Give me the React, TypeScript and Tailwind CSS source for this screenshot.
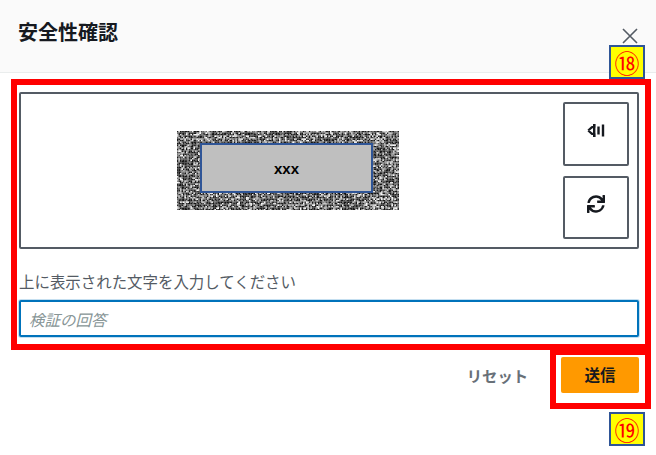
import { FaSync } from 'react-icons/fa'

const CJK = 'font-["Noto_Sans_CJK_JP","Noto_Sans",sans-serif]'

// seeded so the captcha noise is the same on every load
function makeNoise(cols: number, rows: number) {
    let seed = 18
    const cells: { x: number; y: number; c: string }[] = []
    for (let y = 0; y < rows; y++) {
        for (let x = 0; x < cols; x++) {
            seed = (seed * 1664525 + 1013904223) % 4294967296
            const v = (seed >>> 8) / 16777216
            const shade = Math.round(20 + v * v * 235)
            cells.push({ x, y, c: `rgb(${shade},${shade},${shade})` })
        }
    }
    return cells
}

const NOISE = makeNoise(148, 53)

function Noise() {
    return (
        <svg width="222" height="79" viewBox="0 0 148 52.67" className="block">
            {NOISE.map(n => (
                <rect key={`${n.x}-${n.y}`} x={n.x} y={n.y} width="1.05" height="1.05" fill={n.c} />
            ))}
        </svg>
    )
}

function SpeakerIcon() {
    return (
        <svg width="18" height="15" viewBox="0 0 18 15" fill="none" stroke="#16191f">
            <path d="M1.2 7.5 L5 4.2 H7.2 V1 M7.2 14 V10.8 H5 L1.2 7.5" strokeWidth="2.2" strokeLinejoin="round" />
            <path d="M7.2 1 V14" strokeWidth="2.4" />
            <path d="M11.5 3.5 V11.5" strokeWidth="2.4" />
            <path d="M16 1.5 V13.5" strokeWidth="2.4" />
        </svg>
    )
}

function Badge({ label, className }: { label: string; className: string }) {
    return (
        <div className={`absolute flex h-[34px] w-[36px] items-center justify-center border-2 border-[#2f5597] bg-[#ffff00] text-[25px] leading-none text-[#ff0000] ${className}`}>
            {label}
        </div>
    )
}

export default function App() {
    return (
        <div className={`relative h-[455px] w-[656px] overflow-hidden bg-white ${CJK}`}>
            {/* Header */}
            <div className="flex h-[73px] items-start justify-between border-b border-[#eaeded] bg-[#fafafa] pl-[18px] pr-[18px]">
                <h2 className="mt-[18px] text-[20px] font-bold leading-[28px] text-[#16191f]">安全性確認</h2>
                <button className="mt-[28px] text-[#545b64]">
                    <svg width="16" height="16" viewBox="0 0 16 16" stroke="currentColor" strokeWidth="1.6" fill="none">
                        <path d="M1 1 L15 15 M15 1 L1 15" />
                    </svg>
                </button>
            </div>

            <div className="pl-[19px] pr-[17px] pt-[19px]">
                {/* Captcha */}
                <div className="flex h-[157px] items-start rounded-[2px] border-2 border-[#545b64] bg-white">
                    <div className="relative ml-[156px] mt-[37px] h-[79px] w-[222px]">
                        <Noise />
                        <div className="absolute left-[23px] top-[12px] flex h-[50px] w-[173px] items-center justify-center border-2 border-[#2f5597] bg-[#bfbfbf] pt-[3px] font-['Liberation_Sans',sans-serif] text-[15px] font-bold text-black">
                            xxx
                        </div>
                    </div>
                    <div className="ml-auto mr-[8px] mt-[8px] flex flex-col gap-[10px]">
                        <button className="flex h-[64px] w-[66px] items-center justify-center rounded-[2px] border-2 border-[#545b64] bg-white pb-[8px]">
                            <SpeakerIcon />
                        </button>
                        <button className="flex h-[63px] w-[66px] items-center justify-center rounded-[2px] border-2 border-[#545b64] bg-white pb-[7px]">
                            <FaSync size={18} color="#16191f" />
                        </button>
                    </div>
                </div>

                {/* Answer */}
                <p className="mt-[22px] text-[15.45px] leading-[20px] text-[#545b64]">上に表示された文字を入力してください</p>
                <input
                    type="text"
                    placeholder="検証の回答"
                    className="mt-[9px] block h-[37px] w-full rounded-[2px] border-2 border-[#0073bb] bg-white px-[8px] text-[15.5px] italic text-[#16191f] shadow-[0_0_0_1px_#c5dff0] outline-none placeholder:text-[#879596]"
                />

                {/* Actions */}
                <div className="mt-[20px] flex items-center justify-end">
                    <button className="mr-[33px] text-[15.3px] font-bold text-[#687078]">リセット</button>
                    <button className="h-[36px] w-[78px] rounded-[2px] bg-[#ff9900] text-[15.5px] font-bold text-[#16191f]">送信</button>
                </div>
            </div>

            {/* Annotations */}
            <div className="absolute left-[11px] top-[79px] h-[271px] w-[640px] border-[6px] border-[#ff0000]" />
            <div className="absolute left-[550px] top-[349px] h-[60px] w-[101px] border-[6px] border-[#ff0000]" />
            <Badge label="⑱" className="left-[609px] top-[45px]" />
            <Badge label="⑲" className="left-[609px] top-[412px]" />
        </div>
    )
}
